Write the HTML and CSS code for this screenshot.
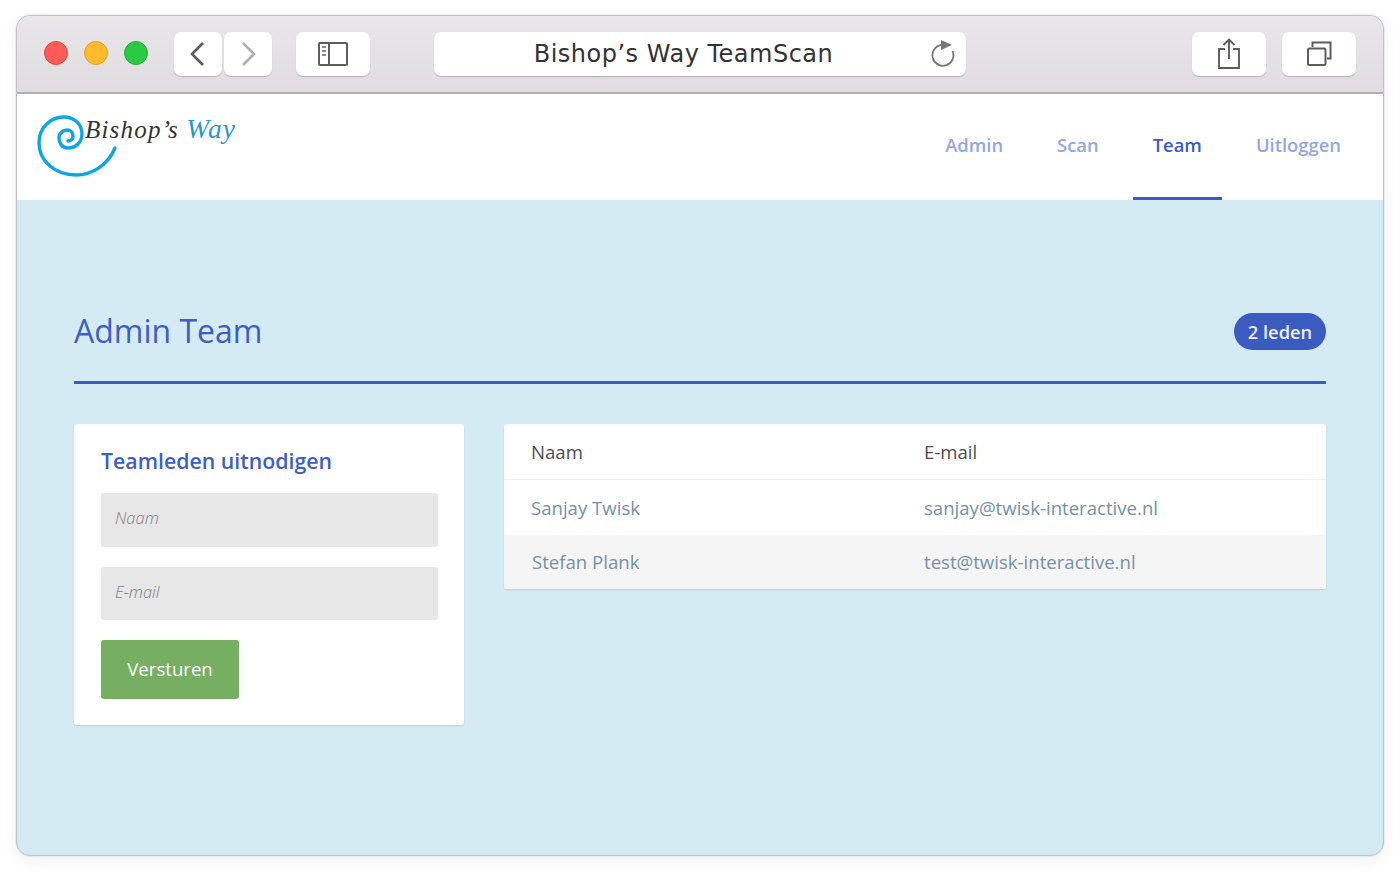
FILE: index.html
```html
<!DOCTYPE html>
<html lang="nl">
<head>
<meta charset="utf-8">
<title>Bishop's Way TeamScan</title>
<link rel="stylesheet" href="styles.css">
</head>
<body>
<div class="window">
  <div class="toolbar">
    <div class="lights">
      <span class="light red"></span>
      <span class="light yellow"></span>
      <span class="light green"></span>
    </div>
    <div class="nav-btns">
      <div class="tb-btn narrow"><svg width="18" height="26" viewBox="0 0 18 26"><path d="M14 2 3 13l11 11" fill="none" stroke="#5c5c5c" stroke-width="2.600"/></svg></div>
      <div class="tb-btn narrow"><svg width="18" height="26" viewBox="0 0 18 26"><path d="M4 2l11 11L4 24" fill="none" stroke="#b0b0b0" stroke-width="2.600"/></svg></div>
    </div>
    <div class="tb-btn wide sidebar-btn"><svg width="30" height="24" viewBox="0 0 30 24"><g fill="none" stroke="#5c5c5c" stroke-width="2"><rect x="1" y="1" width="28" height="22" rx="1"/><path d="M11 1v22"/></g><path d="M4 5h4M4 9h4M4 13h4" stroke="#8a8a8a" stroke-width="1.800"/></svg></div>
    <div class="address">
      <span class="address-title">Bishop’s Way TeamScan</span>
      <svg class="reload" width="26" height="28" viewBox="930 39 26 28"><path d="M941 45A10.500 10.500 0 1 0 952.500 51" fill="none" stroke="#777" stroke-width="1.800"/><path d="M941 40l11 5-11 5z" fill="#777"/></svg>
    </div>
    <div class="tb-btn wide share-btn"><svg width="24" height="32" viewBox="0 0 24 32"><g fill="none" stroke="#5c5c5c" stroke-width="1.900"><path d="M8 11H2v19h20V11h-6"/><path d="M12 21V2M6.500 7 12 1.500 17.500 7"/></g></svg></div>
    <div class="tb-btn wide"><svg width="26" height="26" viewBox="0 0 26 26"><g fill="none" stroke="#5c5c5c" stroke-width="2"><rect x="2" y="7.500" width="17.500" height="16.500" rx="1.500"/><path d="M6.500 6V1.500h18V17.500H21"/></g></svg></div>
  </div>

  <header class="site-header">
    <div class="logo">
      <svg class="spiral" width="84" height="66" viewBox="36 113 84 66"><path d="M115 148C108 165 92 175 76 175 55 175 39 161 39 143 39 127 51 117 64 117 75 117 82 125 82 134 82 143 75 148 68 148 62 148 59 143 59 138 59 133 63 130 67 130 71 130 73 133 73 136 73 139 71 141 68 141" fill="none" stroke="#0ea5e4" stroke-width="3.400" stroke-linecap="round"/></svg>
      <span class="logo-text">Bishop’s <em>Way</em></span>
    </div>
    <nav class="nav">
      <a class="nav-link">Admin</a>
      <a class="nav-link">Scan</a>
      <a class="nav-link active">Team</a>
      <a class="nav-link">Uitloggen</a>
    </nav>
  </header>

  <main class="main">
    <div class="page-head">
      <h1 class="page-title">Admin Team</h1>
      <span class="badge">2 leden</span>
    </div>
    <div class="columns">
      <section class="card invite">
        <h2 class="invite-title">Teamleden uitnodigen</h2>
        <form class="invite-form">
          <input class="field" type="text" placeholder="Naam">
          <input class="field" type="text" placeholder="E-mail">
          <button class="submit" type="button">Versturen</button>
        </form>
      </section>
      <section class="card members">
        <div class="row head"><span>Naam</span><span>E-mail</span></div>
        <div class="row line"><span>Sanjay Twisk</span><span>sanjay@twisk-interactive.nl</span></div>
        <div class="row line alt"><span>Stefan Plank</span><span>test@twisk-interactive.nl</span></div>
      </section>
    </div>
  </main>
</div>
</body>
</html>
```
FILE: styles.css
```css
* { box-sizing: border-box; }
html, body { margin: 0; height: 100%; background: #fff; }
body {
  padding: 15px 16px 18px;
  font-family: "Open Sans", "Liberation Sans", sans-serif;
}
.window {
  height: 841px;
  display: flex;
  flex-direction: column;
  border: 1px solid #c2c2c2;
  border-radius: 14px;
  overflow: hidden;
  box-shadow: 0 0 0 1px rgba(0,0,0,.04), 0 4px 16px rgba(0,0,0,.07);
  background: #d5ebf4;
}
.toolbar {
  height: 78px;
  flex: none;
  display: flex;
  align-items: flex-start;
  padding: 16px 27px 0;
  background: linear-gradient(#e9e7ea, #e0dce0);
  border-bottom: 2px solid #b1afb0;
}
.lights { display: flex; gap: 16px; margin-top: 9px; width: 130px; flex: none; }
.light { width: 24px; height: 24px; border-radius: 50%; border: 1px solid; }
.red { background: #fd5b57; border-color: #e14640; }
.yellow { background: #febb2e; border-color: #e1a028; }
.green { background: #29c941; border-color: #25ae37; }
.nav-btns { display: flex; gap: 2px; margin-right: 24px; flex: none; }
.tb-btn {
  height: 44px;
  flex: none;
  background: #fff;
  border-radius: 7px;
  box-shadow: 0 1px 1px rgba(0,0,0,.2);
  display: flex;
  align-items: center;
  justify-content: center;
}
.narrow { width: 48px; }
.wide { width: 74px; }
.sidebar-btn { margin-right: 64px; }
.share-btn { margin-right: 16px; }
.address {
  width: 532px;
  height: 44px;
  flex: none;
  margin-right: 226px;
  background: #fff;
  border-radius: 7px;
  box-shadow: 0 1px 1px rgba(0,0,0,.2);
  display: flex;
  align-items: center;
  justify-content: center;
  position: relative;
  padding-right: 33px;
}
.address-title {
  font-family: "DejaVu Sans", sans-serif;
  font-size: 24px;
  letter-spacing: .5px;
  color: #333;
}
.reload { position: absolute; right: 10px; top: 7px; }
.site-header {
  height: 106px;
  flex: none;
  background: #fff;
  display: flex;
  justify-content: space-between;
}
.logo { position: relative; width: 240px; }
.spiral { position: absolute; left: 19px; top: 19px; }
.logo-text {
  position: absolute;
  left: 68px;
  top: 19px;
  font-family: "Liberation Serif", serif;
  font-style: italic;
  font-size: 25px;
  letter-spacing: 1.2px;
  color: #333;
  white-space: nowrap;
}
.logo-text em { color: #2799cf; font-size: 27.500px; }
.nav { display: flex; padding-right: 22px; }
.nav-link {
  padding: 0 20px 2px;
  margin-left: 14px;
  display: flex;
  align-items: center;
  font-size: 18.400px;
  font-weight: 600;
  color: #93a7e2;
  border-bottom: 3px solid transparent;
}
.nav-link.active { color: #3c5bbf; border-bottom-color: #3c5bbf; }
.main { flex: 1; padding: 0 57px; }
.page-head {
  height: 184px;
  display: flex;
  justify-content: space-between;
  align-items: center;
  border-bottom: 3px solid #3c5bbf;
  padding-top: 104px;
  padding-bottom: 25px;
}
.page-title { margin: 0; font-size: 32px; font-weight: 400; color: #3e5ec4; }
.badge {
  width: 92px;
  height: 37px;
  margin-top: 2px;
  border-radius: 19px;
  background: #3a5bc0;
  color: #eef;
  font-size: 18.300px;
  font-weight: 600;
  display: flex;
  align-items: center;
  justify-content: center;
}
.columns { display: flex; gap: 40px; margin-top: 40px; align-items: flex-start; }
.card { background: #fff; border-radius: 3px; box-shadow: 0 1px 2px rgba(0,0,0,.12); }
.invite { width: 390px; height: 301px; padding: 21px 26px 0 27px; }
.invite-title { margin: 0 0 17.300px; font-size: 21.300px; line-height: 31px; font-weight: 600; color: #3e5ec4; }
.invite-form { display: flex; flex-direction: column; align-items: flex-start; gap: 20px; }
.field {
  width: 337px;
  height: 53.400px;
  border: 0;
  border-radius: 3px;
  background: #e7e7e7;
  padding: 0 14px 4px;
  font: italic 300 16.500px "Open Sans", sans-serif;
  outline: 0;
}
.field::placeholder { color: #808080; opacity: 1; }
.submit {
  width: 138px;
  height: 58.500px;
  border: 0;
  border-radius: 3px;
  padding: 0 0 2px;
  background: #76af61;
  color: #fff;
  font: 400 18.600px "Open Sans", sans-serif;
}
.members { flex: 1; overflow: hidden; }
.row {
  display: grid;
  grid-template-columns: 393px 1fr;
  padding: 0 27px;
  align-items: center;
  font-size: 18.600px;
}
.head { height: 56px; color: #4d4d4d; border-bottom: 1px solid #eceff1; padding-bottom: 1px; }
.line { height: 55px; color: #7690a8; }
.alt { background: #f5f5f5; height: 54px; padding-left: 28px; padding-bottom: 1px; }
.alt span:last-child { margin-left: -1px; }
```
